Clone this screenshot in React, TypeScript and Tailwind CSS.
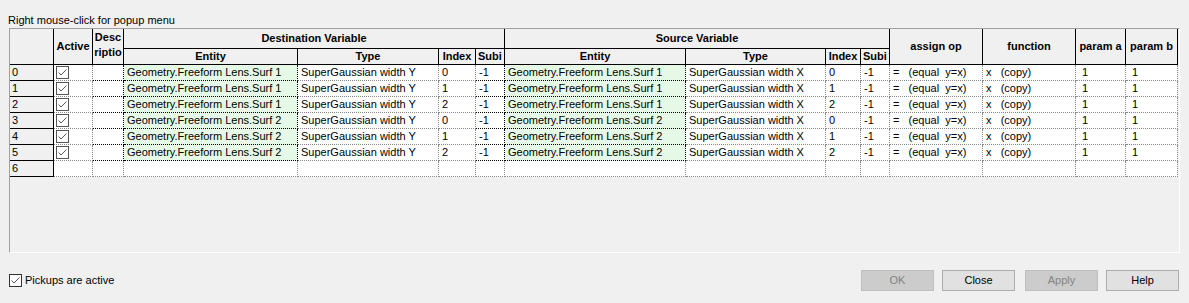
import React from "react";

type Row = {
  dEnt: string;
  dType: string;
  dIdx: string;
  sEnt: string;
  sType: string;
  sIdx: string;
};

const rows: Row[] = [
  { dEnt: "Geometry.Freeform Lens.Surf 1", dType: "SuperGaussian width Y", dIdx: "0", sEnt: "Geometry.Freeform Lens.Surf 1", sType: "SuperGaussian width X", sIdx: "0" },
  { dEnt: "Geometry.Freeform Lens.Surf 1", dType: "SuperGaussian width Y", dIdx: "1", sEnt: "Geometry.Freeform Lens.Surf 1", sType: "SuperGaussian width X", sIdx: "1" },
  { dEnt: "Geometry.Freeform Lens.Surf 1", dType: "SuperGaussian width Y", dIdx: "2", sEnt: "Geometry.Freeform Lens.Surf 1", sType: "SuperGaussian width X", sIdx: "2" },
  { dEnt: "Geometry.Freeform Lens.Surf 2", dType: "SuperGaussian width Y", dIdx: "0", sEnt: "Geometry.Freeform Lens.Surf 2", sType: "SuperGaussian width X", sIdx: "0" },
  { dEnt: "Geometry.Freeform Lens.Surf 2", dType: "SuperGaussian width Y", dIdx: "1", sEnt: "Geometry.Freeform Lens.Surf 2", sType: "SuperGaussian width X", sIdx: "1" },
  { dEnt: "Geometry.Freeform Lens.Surf 2", dType: "SuperGaussian width Y", dIdx: "2", sEnt: "Geometry.Freeform Lens.Surf 2", sType: "SuperGaussian width X", sIdx: "2" },
];

const head = "flex items-center justify-center overflow-hidden whitespace-nowrap border-r border-b border-black bg-[#f0f0f0] font-bold";
const cell = "overflow-hidden whitespace-nowrap border-r border-b border-dotted leading-[15px]";
const gray = "border-[#8a8a8a] bg-white pl-[3px]";
const dark = "border-black bg-white pl-[3px]";
const green = "border-black bg-[#e6f9e6] pl-[3px]";

function Check({ strong }: { strong?: boolean }) {
  return (
    <div className={`flex h-[13px] w-[13px] items-center justify-center border bg-white ${strong ? "border-[#333333]" : "border-[#555555]"}`}>
      <svg width="11" height="11" viewBox="0 0 11 11">
        <polyline points="1.5,5.5 4,8 9.5,2.5" fill="none" stroke="#5a5a5a" strokeWidth="1" />
      </svg>
    </div>
  );
}

function Btn({ label, disabled }: { label: string; disabled?: boolean }) {
  return (
    <div
      className={`flex h-[21px] w-[73px] items-center justify-center border text-[11px] ${
        disabled ? "border-[#bfbfbf] bg-[#cccccc] text-[#838383]" : "border-[#adadad] bg-[#e1e1e1] text-black"
      }`}
    >
      {label}
    </div>
  );
}

export default function App() {
  return (
    <div className="h-[303px] w-[1189px] bg-[#f0f0f0] pt-[13px] font-['Liberation_Sans',Arial,sans-serif] text-[11px] text-black">
      <div className="h-[15px] pl-[8px] leading-[15px]">Right mouse-click for popup menu</div>

      <div className="ml-[9px] h-[225px] w-[1171px] border-t border-l border-r border-b border-t-[#a0a0a0] border-l-[#a0a0a0] border-r-white border-b-white">
        <div className="grid grid-cols-[44px_39px_31px_174px_141px_37px_29px_181px_140px_35px_29px_93px_93px_50px_52px] grid-rows-[20px_16px_repeat(7,16px)]">
          <div className={`${head} row-span-2`} />
          <div className={`${head} row-span-2`}>Active</div>
          <div className="row-span-2 overflow-hidden border-r border-b border-black bg-[#f0f0f0] pt-[1px] text-center font-bold leading-[15px]">
            Desc
            <br />
            riptio
            <br />n
          </div>
          <div className={`${head} col-span-4`}>Destination Variable</div>
          <div className={`${head} col-span-4`}>Source Variable</div>
          <div className={`${head} row-span-2`}>assign op</div>
          <div className={`${head} row-span-2`}>function</div>
          <div className={`${head} row-span-2`}>param a</div>
          <div className={`${head} row-span-2`}>param b</div>
          <div className={head}>Entity</div>
          <div className={head}>Type</div>
          <div className={head}>Index</div>
          <div className={`${head} justify-start pl-[2px]`}>Subi</div>
          <div className={head}>Entity</div>
          <div className={head}>Type</div>
          <div className={head}>Index</div>
          <div className={`${head} justify-start pl-[2px]`}>Subi</div>

          {rows.map((r, i) => (
            <React.Fragment key={i}>
              <div className="border-r border-b border-black bg-[#f0f0f0] pl-[2px] leading-[15px]">{i}</div>
              <div className={`${cell} flex items-center border-[#8a8a8a] bg-white pl-[2px]`}>
                <Check />
              </div>
              <div className={`${cell} ${dark}`} />
              <div className={`${cell} ${green}`}>{r.dEnt}</div>
              <div className={`${cell} ${gray}`}>{r.dType}</div>
              <div className={`${cell} ${gray}`}>{r.dIdx}</div>
              <div className={`${cell} ${dark}`}>-1</div>
              <div className={`${cell} ${green}`}>{r.sEnt}</div>
              <div className={`${cell} ${gray}`}>{r.sType}</div>
              <div className={`${cell} ${gray}`}>{r.sIdx}</div>
              <div className={`${cell} ${gray}`}>-1</div>
              <div className={`${cell} ${gray}`}>=&nbsp;&nbsp;&nbsp;(equal&nbsp;&nbsp;y=x)</div>
              <div className={`${cell} ${gray}`}>x&nbsp;&nbsp;&nbsp;(copy)</div>
              <div className={`${cell} ${gray}`}>&nbsp;1</div>
              <div className={`${cell} ${gray}`}>&nbsp;1</div>
            </React.Fragment>
          ))}

          <div className="border-r border-b border-black bg-[#f0f0f0] pl-[2px] leading-[15px]">6</div>
          {Array.from({ length: 14 }).map((_, j) => (
            <div key={j} className={`${cell} ${gray}`} />
          ))}
        </div>
      </div>

      <div className="mt-[17px] flex items-center pl-[9px] pr-[10px]">
        <Check strong />
        <span className="ml-[3px] text-[11px]">Pickups are active</span>
        <div className="ml-auto flex items-center">
          <Btn label="OK" disabled />
          <div className="ml-[8px]">
            <Btn label="Close" />
          </div>
          <div className="ml-[10px]">
            <Btn label="Apply" disabled />
          </div>
          <div className="ml-[8px]">
            <Btn label="Help" />
          </div>
        </div>
      </div>
    </div>
  );
}
